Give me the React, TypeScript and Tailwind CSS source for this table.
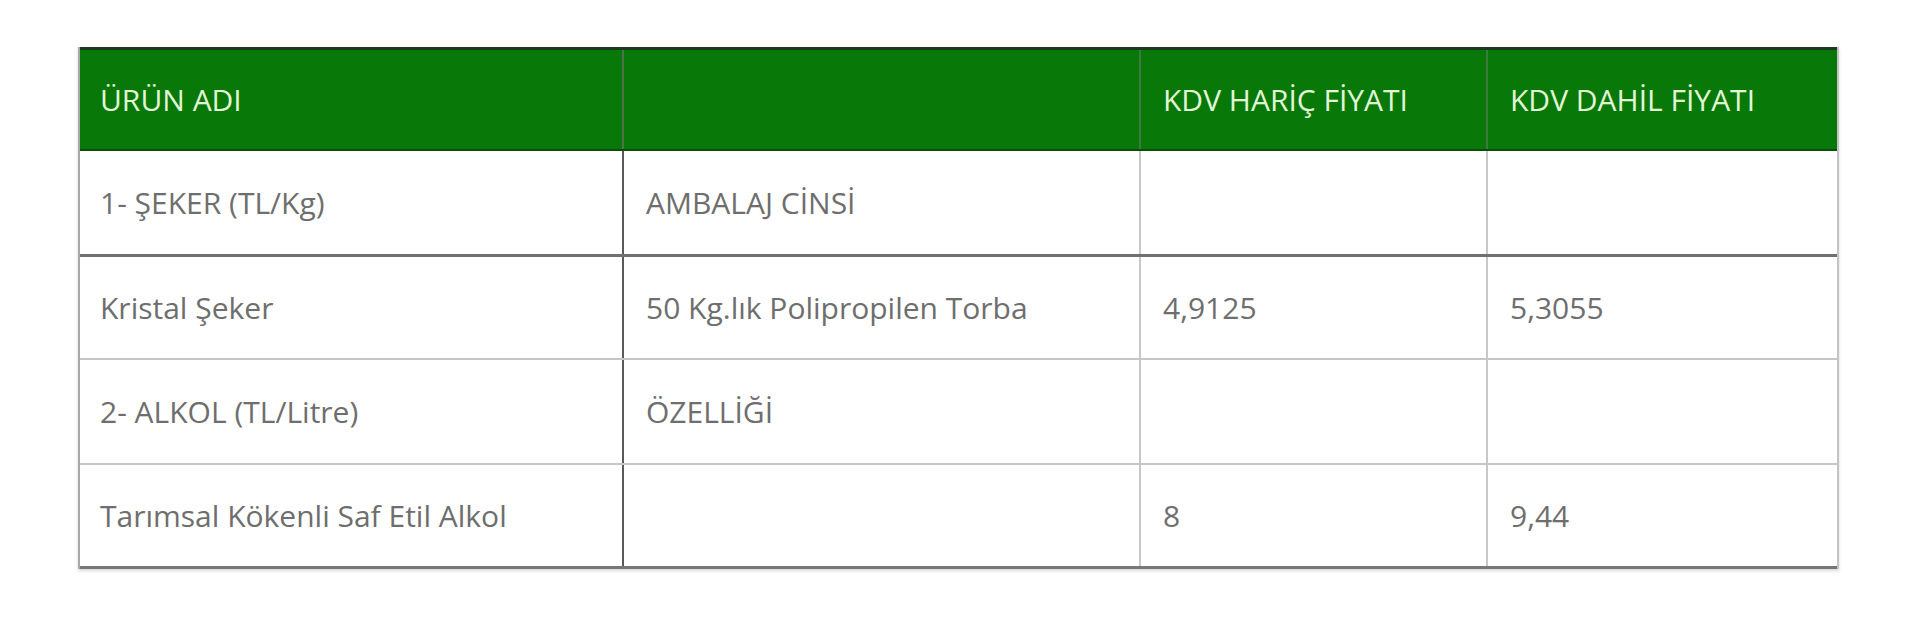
import React from "react";

const rows: { cells: string[]; cls: string }[] = [
  { cells: ["1- ŞEKER (TL/Kg)", "AMBALAJ CİNSİ", "", ""], cls: "h-[106px] border-b-[3px] border-b-[#707070]" },
  { cells: ["Kristal Şeker", "50 Kg.lık Polipropilen Torba", "4,9125", "5,3055"], cls: "h-[103px] border-b-2 border-b-[#c6c6c6]" },
  { cells: ["2- ALKOL (TL/Litre)", "ÖZELLİĞİ", "", ""], cls: "h-[105px] border-b-2 border-b-[#c6c6c6]" },
  { cells: ["Tarımsal Kökenli Saf Etil Alkol", "", "8", "9,44"], cls: "h-[104px] border-b-[3px] border-b-[#777777]" },
];

const colBorders = [
  "border-r-2 border-r-[#5a5a5a]",
  "border-r-2 border-r-[#c8c8c8]",
  "border-r-2 border-r-[#c8c8c8]",
  "",
];

export default function App() {
  return (
    <div
      className="w-[1920px] h-[618px] bg-white pt-[47px] pl-[78px]"
      style={{ fontFamily: '"Open Sans", "Noto Sans", sans-serif' }}
    >
      <div className="w-[1761px] border-l-2 border-l-[#a8a8a8] border-r-2 border-r-[#c4c4c4] shadow-[0_2px_3px_rgba(0,0,0,0.15)]">
        <div className="grid grid-cols-[544px_517px_347px_1fr] h-[104px] bg-[#087808] border-t-[3px] border-t-[#1e3a1e] border-b-2 border-b-[#0b4d0b] text-[30px] text-[#e2f6d6]">
          <div className="flex items-center pl-[20px] border-r-2 border-r-[#4f6f4f]">ÜRÜN ADI</div>
          <div className="flex items-center pl-[22px] border-r-2 border-r-[#3e7a3e]"></div>
          <div className="flex items-center pl-[22px] border-r-2 border-r-[#3e7a3e]">KDV HARİÇ FİYATI</div>
          <div className="flex items-center pl-[22px]">KDV DAHİL FİYATI</div>
        </div>
        {rows.map((r, i) => (
          <div
            key={i}
            className={`grid grid-cols-[544px_517px_347px_1fr] text-[30px] text-[#6e6e6e] ${r.cls}`}
          >
            {r.cells.map((c, j) => (
              <div
                key={j}
                className={`flex items-center ${j === 0 ? "pl-[20px]" : "pl-[22px]"} ${colBorders[j]}`}
              >
                {c}
              </div>
            ))}
          </div>
        ))}
      </div>
    </div>
  );
}
